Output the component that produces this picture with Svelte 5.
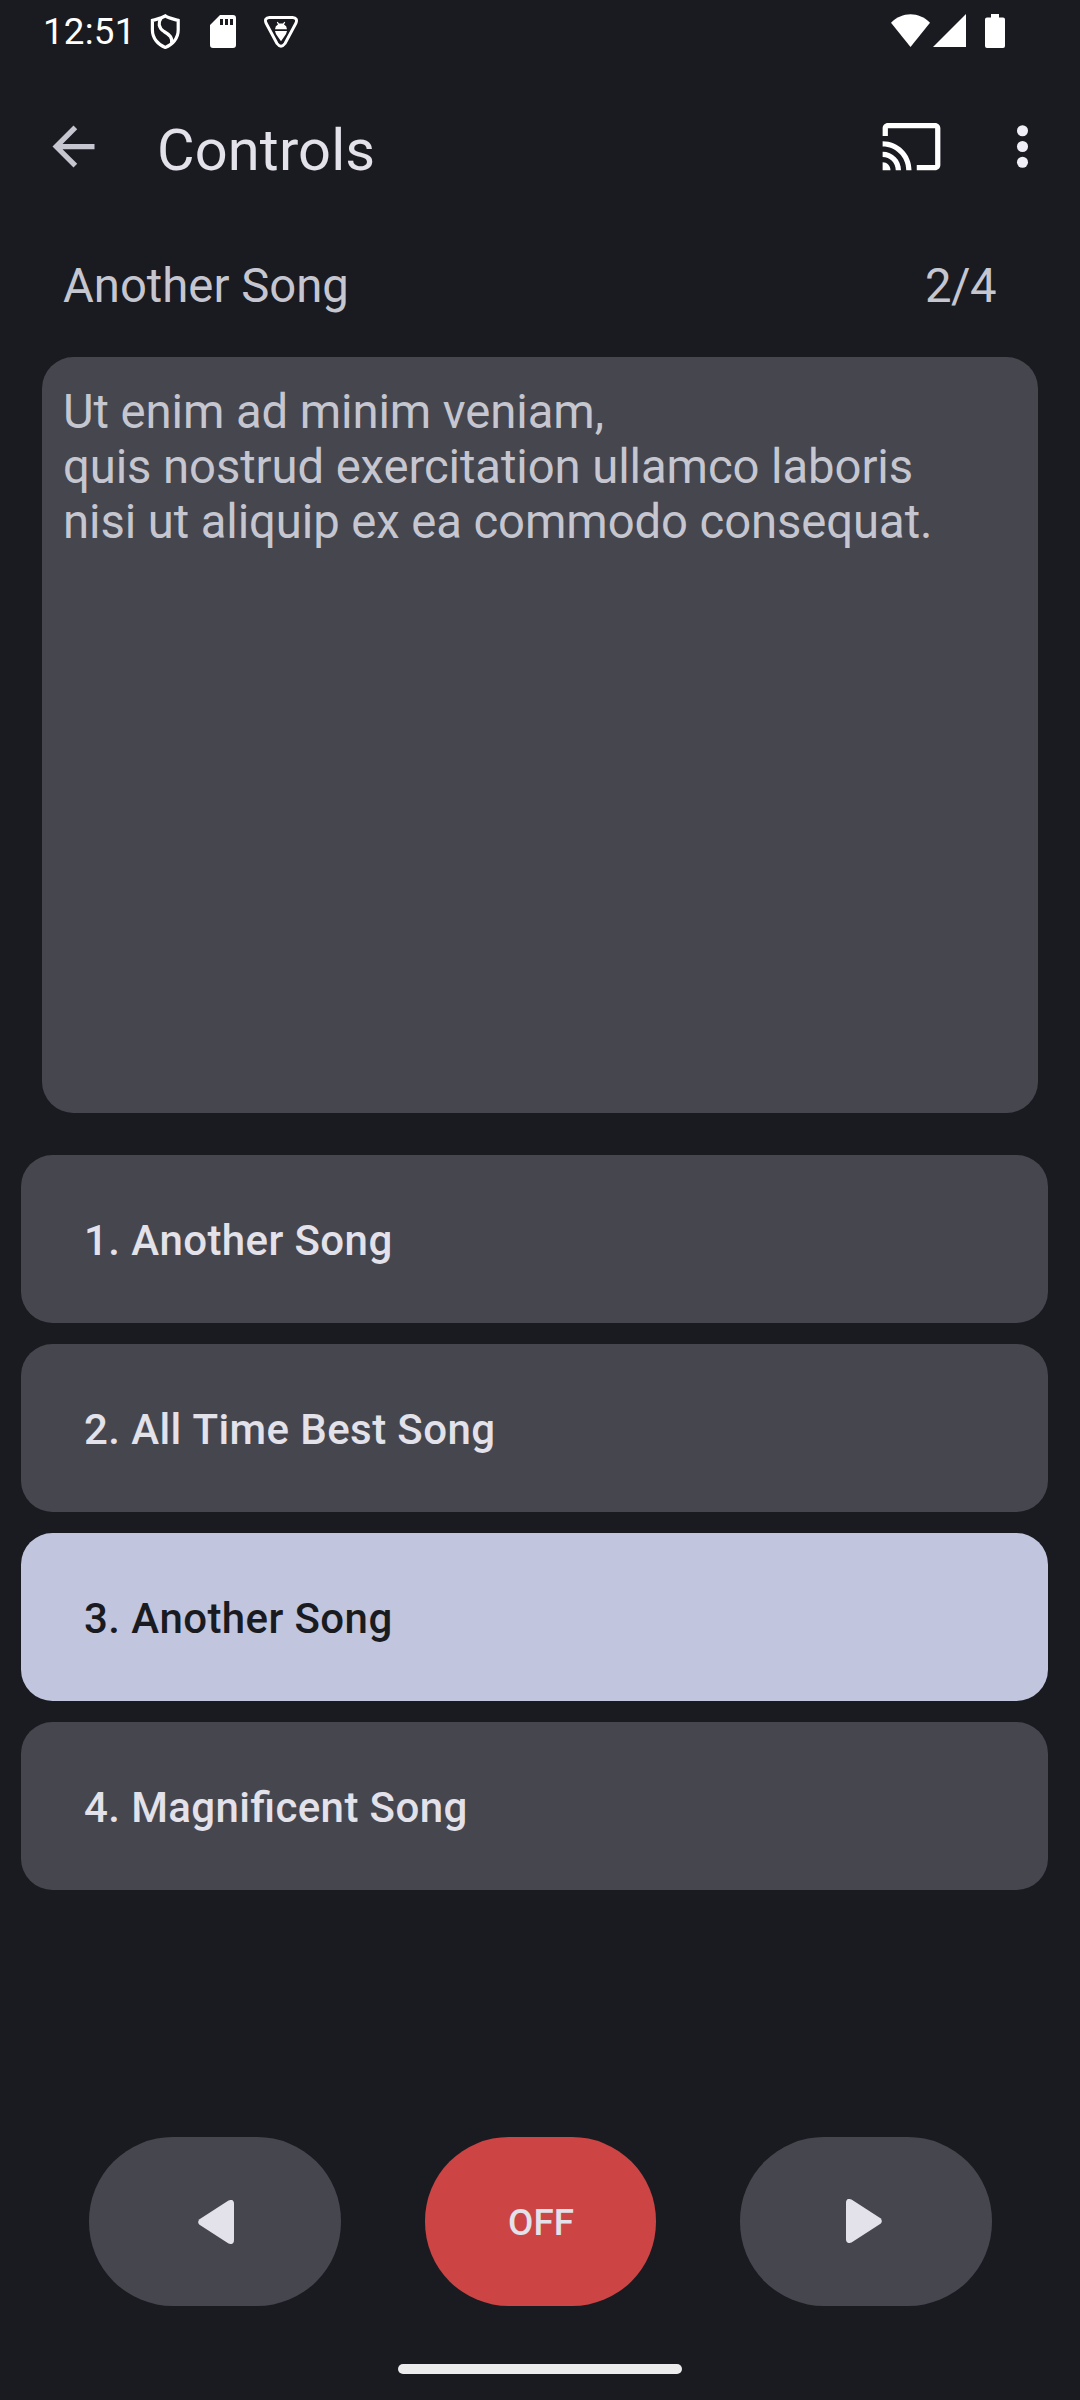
<script>
  const songs = ['Another Song', 'All Time Best Song', 'Another Song', 'Magnificent Song'];
  const lyrics = [
    'Ut enim ad minim veniam,',
    'quis nostrud exercitation ullamco laboris',
    'nisi ut aliquip ex ea commodo consequat.',
  ];
  let selected = $state(2);
</script>

<div class="screen">
  <div class="status">
    <span class="time">12:51</span>
    <svg class="shield" viewBox="0 0 30 36" width="30" height="36" fill="none" stroke="#fff" stroke-width="3.2">
      <path d="M15.3 1.9C11.5 4.4 6.5 5.2 2.4 6.4V16C2.4 24 8 31 15.3 33.4C22.6 31 28.2 24 28.2 16V6.4C24 5.2 19 4.4 15.3 1.9Z" />
      <path d="M11.2 3.8C8 8.5 8.3 14 14 17.5C20 21 22.5 23.5 21.5 29" />
    </svg>
    <svg class="sd" viewBox="0 0 26 33" width="26" height="33">
      <path fill="#fff" fill-rule="evenodd" d="M10 0H23Q26 0 26 3V30Q26 33 23 33H3Q0 33 0 30V10ZM10 4V10H13V4ZM15 4V10H18V4ZM20 4V10H23V4Z" />
    </svg>
    <svg class="bug" viewBox="0 0 34 32" width="34" height="32">
      <path fill="none" stroke="#fff" stroke-width="2.9" stroke-linejoin="round" d="M5.5 1.5H28.5Q34 2 32 7L21 27.5Q17 33 13 27.5L2 7Q0 2 5.5 1.5Z" />
      <path fill="#fff" d="M11 13.2Q11.2 9.8 14 8.5L12.8 6.2L13.7 5.7L15 7.5H19L20.3 5.7L21.2 6.2L20 8.5Q22.8 9.8 23 13.2ZM11 15H23Q22.4 18.5 20 21L17 25.2L14 21Q11.6 18.5 11 15Z" />
    </svg>
    <span class="spacer"></span>
    <svg class="wifi" viewBox="0 0 39 33" width="39" height="33">
      <path fill="#fff" d="M0 8.8C11-2.7 28-2.7 39 8.8L19.5 33Z" />
    </svg>
    <svg class="signal" viewBox="0 0 33 33" width="33" height="33"><path fill="#fff" d="M33 0V33H0Z" /></svg>
    <svg class="battery" viewBox="0 0 20 34" width="20" height="34">
      <path fill="#fff" d="M6 0H14V3.4H18Q20 3.4 20 5.4V32Q20 34 18 34H2Q0 34 0 32V5.4Q0 3.4 2 3.4H6Z" />
    </svg>
  </div>

  <header class="toolbar">
    <svg class="icon" viewBox="0 0 24 24" fill="#c5c6d0">
      <path d="M20 11H7.83l5.59-5.59L12 4l-8 8 8 8 1.41-1.41L7.83 13H20v-2z" />
    </svg>
    <h1>Controls</h1>
    <svg class="icon cast" viewBox="0 0 24 24" fill="#fff">
      <path d="M21 3H3c-1.1 0-2 .9-2 2v3h2V5h18v14h-7v2h7c1.1 0 2-.9 2-2V5c0-1.1-.9-2-2-2zM1 18v3h3c0-1.66-1.34-3-3-3zm0-4v2c2.76 0 5 2.24 5 5h2c0-3.87-3.13-7-7-7zm0-4v2c4.97 0 9 4.03 9 9h2c0-6.08-4.93-11-11-11z" />
    </svg>
    <svg class="icon" viewBox="0 0 24 24" fill="#f0eff7">
      <circle cx="12" cy="6" r="2.1" /><circle cx="12" cy="12" r="2.1" /><circle cx="12" cy="18" r="2.1" />
    </svg>
  </header>

  <div class="heading">
    <span>Another Song</span>
    <span class="count">2/4</span>
  </div>

  <section class="lyrics">
    {#each lyrics as line}
      <div>{line}</div>
    {/each}
  </section>

  <div class="list">
    {#each songs as song, i}
      <button class="song" class:selected={i === selected} onclick={() => (selected = i)}>{i + 1}. {song}</button>
    {/each}
  </div>

  <div class="controls">
    <button class="nav" aria-label="Previous">
      <svg class="prev" viewBox="0 0 36 44" width="36" height="44">
        <path fill="#e3e1e9" d="M30.5 .5Q36-1.5 36 4V40Q36 45.5 30.5 43.5L1.5 24.8Q-1.2 22 1.5 19.2Z" />
      </svg>
    </button>
    <button class="off">OFF</button>
    <button class="nav" aria-label="Next">
      <svg class="next" viewBox="0 0 36 44" width="36" height="44">
        <path fill="#e3e1e9" d="M5.5 .5Q0-1.5 0 4V40Q0 45.5 5.5 43.5L34.5 24.8Q37.2 22 34.5 19.2Z" />
      </svg>
    </button>
  </div>
  <div class="gesture"></div>
</div>

<style>
  :global(body) {
    margin: 0;
    background: #1a1b20;
  }
  .screen {
    box-sizing: border-box;
    width: 1080px;
    height: 2400px;
    display: flex;
    flex-direction: column;
    background: #1a1b20;
    color: #c5c6d0;
    font-family: Roboto, sans-serif;
    overflow: hidden;
  }
  svg {
    display: block;
    flex: none;
  }
  button {
    border: 0;
    margin: 0;
    padding: 0;
    font-family: inherit;
    background: #46464f;
    color: #e3e1e9;
  }
  .status {
    display: flex;
    align-items: flex-start;
    height: 84px;
    padding: 14px 75px 0 43px;
    box-sizing: border-box;
    color: #fff;
  }
  .time {
    width: 107px;
    font-size: 36.75px;
    line-height: 43px;
    margin-top: -4px;
    letter-spacing: 0.2px;
  }
  .sd {
    margin: 1px 0 0 30px;
  }
  .bug {
    margin: 2px 0 0 28px;
  }
  .spacer {
    flex: 1;
  }
  .signal {
    margin-left: 3px;
  }
  .battery {
    margin-left: 19px;
  }
  .toolbar {
    display: flex;
    align-items: center;
    height: 125px;
    padding: 0 26px 0 42px;
  }
  .icon {
    width: 63px;
    height: 63px;
  }
  h1 {
    flex: 1;
    margin: 6px 0 0 52px;
    font-size: 57.75px;
    line-height: 68px;
    font-weight: 400;
    letter-spacing: 0.15px;
    color: #e3e1e9;
  }
  .cast {
    margin-right: 48px;
  }
  .heading {
    display: flex;
    justify-content: space-between;
    height: 98px;
    padding: 50px 84px 0 63px;
    font-size: 47.25px;
    line-height: 55px;
  }
  .count {
    letter-spacing: -0.5px;
  }
  .lyrics {
    box-sizing: border-box;
    height: 756px;
    margin: 0 42px;
    padding: 28px 21px;
    border-radius: 31.5px;
    background: #46464f;
    font-size: 47.25px;
    line-height: 55px;
    letter-spacing: -0.09px;
    white-space: nowrap;
  }
  .list {
    display: flex;
    flex-direction: column;
    gap: 21px;
    margin: 42px 32px 0 21px;
  }
  .song {
    height: 168px;
    padding: 2px 63px 0;
    border-radius: 31.5px;
    text-align: left;
    font-size: 42px;
    font-weight: 500;
    font-kerning: none;
    font-feature-settings: 'liga' 1;
    letter-spacing: 0.4px;
  }
  .song.selected {
    background: #c1c5dd;
    color: #1a1b20;
  }
  .controls {
    display: flex;
    justify-content: center;
    gap: 84px;
    margin-top: 247px;
  }
  .controls button {
    display: flex;
    align-items: center;
    justify-content: center;
    height: 169px;
    border-radius: 84px;
  }
  .nav {
    width: 252px;
  }
  .controls .off {
    box-sizing: border-box;
    width: 231px;
    padding: 2px 0 0 2px;
    background: #cc4444;
    font-size: 36.75px;
    font-weight: 500;
  }
  .prev {
    margin: 1px 0 0 2px;
  }
  .next {
    margin: 0 3px 1px 0;
  }
  .gesture {
    width: 284px;
    height: 10px;
    margin: 58px auto 0;
    border-radius: 5px;
    background: #ececec;
  }
</style>
